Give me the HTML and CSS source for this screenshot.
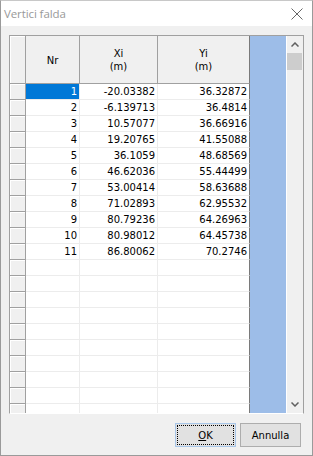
FILE: index.html
```html
<!DOCTYPE html>
<html>
<head>
<meta charset="utf-8">
<link rel="stylesheet" href="styles.css">
</head>
<body>
<div class="window">
  <div class="titlebar">
    <span class="title">Vertici falda</span>
    <svg class="close" width="12" height="12" viewBox="0 0 12 12"><path d="M0.5 0.5 L11.5 11.5 M11.5 0.5 L0.5 11.5" stroke="#666" stroke-width="1" fill="none"/></svg>
  </div>
  <div class="content">
    <div class="gridbox">
      <div class="table">
        <div class="row head">
          <div class="rh"></div>
          <div class="hc">Nr</div>
          <div class="hc">Xi<br>(m)</div>
          <div class="hc last">Yi<br>(m)</div>
        </div>
        <div class="row"><div class="rh"></div><div class="c sel">1</div><div class="c">-20.03382</div><div class="c last">36.32872</div></div>
        <div class="row"><div class="rh"></div><div class="c">2</div><div class="c">-6.139713</div><div class="c last">36.4814</div></div>
        <div class="row"><div class="rh"></div><div class="c">3</div><div class="c">10.57077</div><div class="c last">36.66916</div></div>
        <div class="row"><div class="rh"></div><div class="c">4</div><div class="c">19.20765</div><div class="c last">41.55088</div></div>
        <div class="row"><div class="rh"></div><div class="c">5</div><div class="c">36.1059</div><div class="c last">48.68569</div></div>
        <div class="row"><div class="rh"></div><div class="c">6</div><div class="c">46.62036</div><div class="c last">55.44499</div></div>
        <div class="row"><div class="rh"></div><div class="c">7</div><div class="c">53.00414</div><div class="c last">58.63688</div></div>
        <div class="row"><div class="rh"></div><div class="c">8</div><div class="c">71.02893</div><div class="c last">62.95532</div></div>
        <div class="row"><div class="rh"></div><div class="c">9</div><div class="c">80.79236</div><div class="c last">64.26963</div></div>
        <div class="row"><div class="rh"></div><div class="c">10</div><div class="c">80.98012</div><div class="c last">64.45738</div></div>
        <div class="row"><div class="rh"></div><div class="c">11</div><div class="c">86.80062</div><div class="c last">70.2746</div></div>
        <div class="row"><div class="rh"></div><div class="c"></div><div class="c"></div><div class="c last"></div></div>
        <div class="row"><div class="rh"></div><div class="c"></div><div class="c"></div><div class="c last"></div></div>
        <div class="row"><div class="rh"></div><div class="c"></div><div class="c"></div><div class="c last"></div></div>
        <div class="row"><div class="rh"></div><div class="c"></div><div class="c"></div><div class="c last"></div></div>
        <div class="row"><div class="rh"></div><div class="c"></div><div class="c"></div><div class="c last"></div></div>
        <div class="row"><div class="rh"></div><div class="c"></div><div class="c"></div><div class="c last"></div></div>
        <div class="row"><div class="rh"></div><div class="c"></div><div class="c"></div><div class="c last"></div></div>
        <div class="row"><div class="rh"></div><div class="c"></div><div class="c"></div><div class="c last"></div></div>
        <div class="row"><div class="rh"></div><div class="c"></div><div class="c"></div><div class="c last"></div></div>
        <div class="row"><div class="rh"></div><div class="c"></div><div class="c"></div><div class="c last"></div></div>
      </div>
      <div class="blue"></div>
      <div class="scrollbar">
        <div class="arrow"><svg width="8" height="5" viewBox="0 0 8 5"><path d="M0.5 4.5 L4 1 L7.5 4.5" stroke="#606060" stroke-width="1.5" fill="none"/></svg></div>
        <div class="thumb"></div>
        <div class="track"></div>
        <div class="arrow"><svg width="8" height="5" viewBox="0 0 8 5"><path d="M0.5 0.5 L4 4 L7.5 0.5" stroke="#606060" stroke-width="1.5" fill="none"/></svg></div>
      </div>
    </div>
    <div class="buttons">
      <div class="btn default"><span class="focus"><u>O</u>K</span></div>
      <div class="btn">Annulla</div>
    </div>
  </div>
</div>
</body>
</html>
```

FILE: styles.css
```css
html, body {
  margin: 0;
  padding: 0;
  background: #f0f0f0;
}
.window {
  width: 313px;
  height: 456px;
  box-sizing: border-box;
  border: 1px solid #9a9a9a;
  border-top-color: #c8c8c8;
  display: flex;
  flex-direction: column;
  font-family: "DejaVu Sans", sans-serif;
  font-size: 10px;
  color: #000;
}
.titlebar {
  height: 25px;
  background: #fff;
  display: flex;
  align-items: center;
  justify-content: space-between;
  padding: 0 9px 0 3px;
  flex: none;
}
.title {
  font-family: "Open Sans", sans-serif;
  font-size: 11.5px;
  color: #999;
  letter-spacing: -0.1px;
}
.close {
  display: block;
  margin-top: 1px;
}
.content {
  flex: 1;
  display: flex;
  flex-direction: column;
  padding: 9px 8px 8px 8px;
  background: #f0f0f0;
}
.gridbox {
  height: 379px;
  box-sizing: border-box;
  border: 1px solid #a0a0a0;
  border-bottom-color: #fff;
  display: flex;
  overflow: hidden;
  background: #fff;
}
.table {
  width: 240px;
  display: flex;
  flex-direction: column;
  overflow: hidden;
}
.row {
  display: grid;
  grid-template-columns: 16px 54px 78px 92px;
  height: 16px;
  flex: none;
}
.row.head {
  height: 48px;
}
.rh {
  background: #f0f0f0;
  border-right: 1px solid #a0a0a0;
  border-bottom: 1px solid #a0a0a0;
  box-shadow: inset 1px 1px 0 #fff;
}
.hc {
  background: #f0f0f0;
  border-right: 1px solid #a0a0a0;
  border-bottom: 1px solid #a0a0a0;
  display: flex;
  align-items: center;
  justify-content: center;
  text-align: center;
  line-height: 13px;
  padding-top: 1px;
}
.hc.last, .c.last {
  border-right-color: #7a7a7a;
}
.c {
  border-right: 1px solid #ececec;
  border-bottom: 1px solid #ececec;
  text-align: right;
  padding-right: 2px;
  line-height: 15px;
  white-space: nowrap;
  overflow: hidden;
}
.c.sel {
  background: #0078d7;
  color: #fff;
}
.blue {
  width: 36px;
  background: #9dbde8;
  flex: none;
}
.scrollbar {
  width: 17px;
  flex: none;
  box-sizing: border-box;
  border-left: 1px solid #fff;
  background: #f0f0f0;
  display: flex;
  flex-direction: column;
}
.arrow {
  height: 17px;
  display: flex;
  align-items: center;
  justify-content: center;
  flex: none;
}
.arrow svg {
  display: block;
}
.thumb {
  height: 17px;
  background: #cdcdcd;
  margin: 0 1px 0 0;
  flex: none;
}
.track {
  flex: 1;
}
.buttons {
  margin-top: 9px;
  display: flex;
  justify-content: flex-end;
  gap: 4px;
  padding-right: 3px;
}
.btn {
  width: 61px;
  height: 24px;
  box-sizing: border-box;
  border: 1px solid #adadad;
  background: #e1e1e1;
  display: flex;
  align-items: center;
  justify-content: center;
  font-size: 10px;
}
.btn.default {
  border-color: #a8c6e8;
  padding: 1px;
}
.focus {
  width: 100%;
  height: 100%;
  box-sizing: border-box;
  border: 1px dotted #000;
  display: flex;
  align-items: center;
  justify-content: center;
}
u {
  text-decoration: underline;
  text-underline-offset: 1px;
}
```
